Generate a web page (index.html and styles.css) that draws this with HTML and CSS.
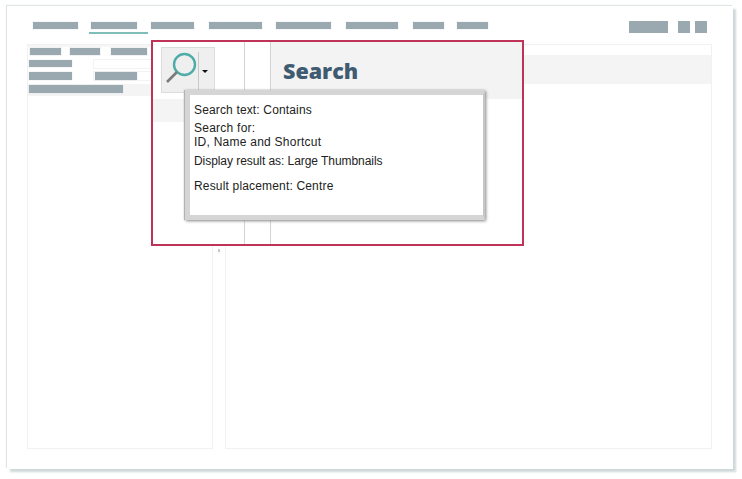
FILE: index.html
```html
<!DOCTYPE html>
<html lang="en">
<head>
<meta charset="utf-8">
<title>Search</title>
<link rel="stylesheet" href="styles.css">
</head>
<body>
<div class="window">
  <header class="nav">
    <div class="menu">
      <span class="bar m1"></span>
      <span class="tab-active"><span class="bar m2"></span></span>
      <span class="bar m3"></span>
      <span class="bar m4"></span>
      <span class="bar m5"></span>
      <span class="bar m6"></span>
      <span class="bar m7"></span>
      <span class="bar m8"></span>
    </div>
    <div class="tools">
      <span class="tool wide"></span>
      <span class="tool"></span>
      <span class="tool"></span>
    </div>
  </header>
  <main class="panels">
    <section class="panel left">
      <div class="tabs">
        <span class="bar t1"></span>
        <span class="bar t2"></span>
        <span class="bar t3"></span>
      </div>
      <div class="field"><span class="bar f1"></span><span class="box"></span></div>
      <div class="field gap"><span class="bar f1"></span><span class="box"><span class="bar f2"></span></span></div>
      <div class="row-grey"><span class="bar f3"></span></div>
    </section>
    <div class="splitter"><span class="grip"></span></div>
    <section class="panel right">
      <div class="row-band"></div>
    </section>
  </main>
</div>

<div class="callout">
  <div class="col-icon">
    <div class="search-btn">
      <svg class="lens" width="35" height="36" viewBox="0 0 35 36" aria-hidden="true">
        <circle cx="21.5" cy="14.5" r="10.5" fill="none" stroke="#4fada8" stroke-width="2.4"/>
        <line x1="14" y1="22" x2="4" y2="32" stroke="#7b7b7b" stroke-width="2.6"/>
      </svg>
      <span class="btn-sep"></span>
      <span class="caret"></span>
    </div>
    <div class="col-fill"></div>
  </div>
  <div class="col-mid"></div>
  <div class="col-main">
    <div class="heading"><h1>Search</h1></div>
  </div>
  <div class="popup">
    <p class="p1">Search text: Contains</p>
    <p class="p2">Search for:<br>ID, Name and Shortcut</p>
    <p class="p3">Display result as: Large Thumbnails</p>
    <p class="p4">Result placement: Centre</p>
  </div>
</div>
</body>
</html>
```
FILE: styles.css
```css
* { box-sizing: border-box; }
html, body { margin: 0; padding: 0; background: #fff; }
body { width: 742px; height: 479px; overflow: hidden; position: relative; }

.window {
  margin: 6px 0 0 7px;
  width: 726px;
  height: 463px;
  background: #fff;
  box-shadow: -1px -1px 1px #dfe5e6, 3px 3px 2px #cfd8d9;
  display: flex;
  flex-direction: column;
}

.bar { display: block; height: 7px; background: #9aa9af; box-shadow: 0 0 1px #c4cfd3; flex: none; }

.nav {
  height: 38px;
  padding: 15px 26px 0 26px;
  display: flex;
  justify-content: space-between;
  align-items: flex-start;
}
.menu { display: flex; align-items: flex-start; padding-top: 1px; }
.tab-active {
  display: block;
  width: 59px;
  height: 12px;
  padding: 0 0 0 2px;
  margin: 0 3px 0 11px;
  border-bottom: 2px solid #7fbdb8;
}
.m1 { width: 45px; }
.m2 { width: 46px; }
.m3 { width: 43px; }
.m4 { width: 53px; margin-left: 15px; }
.m5 { width: 55px; margin-left: 14px; }
.m6 { width: 52px; margin-left: 15px; }
.m7 { width: 31px; margin-left: 15px; }
.m8 { width: 31px; margin-left: 13px; }

.tools { display: flex; gap: 5px; }
.tool { display: block; width: 12px; height: 12px; background: #9aa9af; }
.tool.wide { width: 39px; margin-right: 5px; }

.panels { display: flex; height: 405px; padding-left: 20px; }
.panel { border: 1px solid #f0f1f1; background: #fff; }
.left { width: 186px; }
.right { width: 487px; }
.splitter { width: 12px; padding: 205px 0 0 5px; }
.grip { display: block; width: 2px; height: 3px; background: #c8c8c8; box-shadow: 0 2px 3px #eee; }

.tabs { display: flex; height: 12px; padding: 3px 0 0 2px; background: linear-gradient(#f6f6f6 2px, #fff 2px); }
.t1 { width: 31px; }
.t2 { width: 30px; margin-left: 9px; }
.t3 { width: 36px; margin-left: 11px; }
.tabs .bar { box-shadow: 0 0 0 1px #f3f3f3; }
.field { display: flex; height: 7px; margin-top: 3px; padding-left: 1px; }
.field.gap { height: 8px; margin-top: 5px; }
.field.gap .bar { height: 8px; }
.f1 { width: 43px; }
.f2 { width: 42px; }
.f3 { width: 94px; height: 8px; }
.box {
  display: block;
  width: 58px;
  height: 10px;
  margin: -1px 0 0 21px;
  padding: 0 0 0 1px;
  border: 1px solid #f3f3f3;
  border-right: 0;
}
.row-grey { height: 12px; margin-top: 4px; padding: 1px 0 0 1px; background: #f4f4f4; }

.row-band { height: 29px; margin-top: 10px; background: #f4f4f4; }

.callout {
  position: absolute;
  left: 151px;
  top: 40px;
  width: 373px;
  height: 206px;
  border: 2px solid #bf3358;
  background: #fff;
  display: flex;
}
.col-icon { width: 92px; border-right: 1px solid #d4d4d4; display: flex; flex-direction: column; }
.search-btn {
  width: 54px;
  height: 46px;
  margin: 5px 0 0 8px;
  background: #efefef;
  border: 1px solid #dcdcdc;
  display: flex;
  align-items: flex-start;
  padding: 2px 0 0 1px;
}
.lens { flex: none; }
.btn-sep { width: 1px; height: 38px; background: #c8c8c8; margin: 2px 0 0 0; }
.caret {
  width: 0; height: 0;
  margin: 20px 0 0 3px;
  border-left: 3px solid transparent;
  border-right: 3px solid transparent;
  border-top: 3px solid #111;
}
.col-fill { width: 100%; height: 23px; margin-top: 6px; background: #f4f4f4; }
.col-mid { width: 26px; border-right: 1px solid #d4d4d4; }
.col-main { flex: 1; }
.heading { height: 57px; background: #f3f3f3; padding: 15px 0 0 12px; }
h1 {
  margin: 0;
  font: 800 21.5px/28px "Open Sans", "Liberation Sans", sans-serif;
  color: #3f5b71;
}

.popup {
  position: absolute;
  left: 32px;
  top: 48px;
  width: 300px;
  height: 130px;
  background: #fff;
  border: 5px solid #d5d5d5;
  border-right: 2px solid #c6c6c6;
  box-shadow: 1px 1px 3px #888, -1px 0 1px #bbb;
  padding: 8px 0 0 4px;
  font: 12px/14px "Liberation Sans", sans-serif;
  color: #222;
}
.popup p { margin: 0; }
.p1 { letter-spacing: 0.15px; }
.p2 { padding-top: 4px; letter-spacing: 0.25px; }
.p3 { padding-top: 5px; letter-spacing: -0.06px; }
.p4 { padding-top: 11px; letter-spacing: 0.17px; }
```
